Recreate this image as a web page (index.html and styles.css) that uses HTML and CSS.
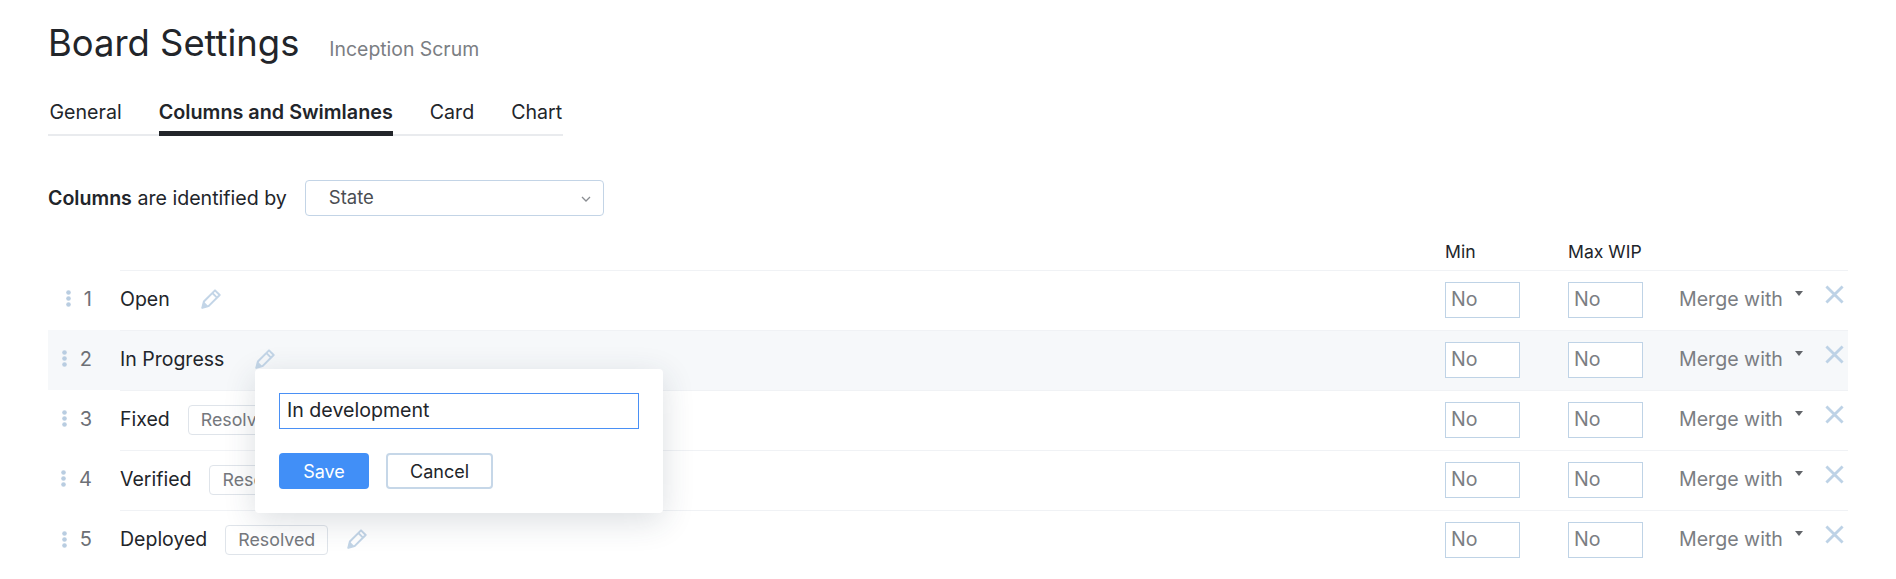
FILE: index.html
```html
<!DOCTYPE html>
<html lang="en">
<head>
<meta charset="utf-8">
<title>Board Settings</title>
<link rel="stylesheet" href="styles.css">
</head>
<body>
<svg class="defs" width="0" height="0" aria-hidden="true">
  <symbol id="pencil" viewBox="1 1 18 18">
    <path d="M2.2 17.8l1.4-5.6L13.6 2.2l4.2 4.2L7.8 16.4z" fill="none" stroke="currentColor" stroke-width="1.8" stroke-linejoin="round"/>
    <path d="M11.2 4.6l4.2 4.2" fill="none" stroke="currentColor" stroke-width="1.6"/>
    <path d="M1.5 18.5l2-6.2 4.2 4.2z" fill="currentColor"/>
  </symbol>
  <symbol id="handle" viewBox="0 0 5 17">
    <circle cx="2.5" cy="2.5" r="2.3" fill="currentColor"/>
    <circle cx="2.5" cy="8.5" r="2.3" fill="currentColor"/>
    <circle cx="2.5" cy="14.5" r="2.3" fill="currentColor"/>
  </symbol>
  <symbol id="close" viewBox="0 0 20 20">
    <path d="M1.5 1.5l17 17M18.5 1.5l-17 17" fill="none" stroke="currentColor" stroke-width="3"/>
  </symbol>
</svg>
<main class="page">
  <header class="title-row">
    <h1 class="title">Board Settings</h1>
    <span class="subtitle">Inception Scrum</span>
  </header>
  <nav class="tabs">
    <a class="tab">General</a>
    <a class="tab tab-active">Columns and Swimlanes</a>
    <a class="tab">Card</a>
    <a class="tab">Chart</a>
  </nav>
  <div class="identify">
    <span class="identify-label"><b>Columns</b> are identified by</span>
    <div class="select">State
      <svg class="chevron" viewBox="0 0 10 6" width="10" height="6"><path d="M1 1l4 4 4-4" fill="none" stroke="currentColor" stroke-width="1.3"/></svg>
    </div>
  </div>
  <div class="row-grid head">
    <span class="head-cell col-min">Min</span>
    <span class="head-cell col-max">Max WIP</span>
  </div>
  <div class="rows">
    <div class="row-grid row">
      <div class="order"><svg class="handle"><use href="#handle"/></svg><span class="num">1</span></div>
      <div class="cell name"><span class="label">Open</span><svg class="pencil"><use href="#pencil"/></svg></div>
      <div class="cell"><span class="wip">No</span></div>
      <div class="cell"><span class="wip">No</span></div>
      <div class="cell"><span class="merge">Merge with</span><i class="caret"></i></div>
      <div class="cell"><svg class="close"><use href="#close"/></svg></div>
    </div>
    <div class="row-grid row row-hover">
      <div class="order"><svg class="handle"><use href="#handle"/></svg><span class="num">2</span></div>
      <div class="cell name"><span class="label">In Progress</span><svg class="pencil"><use href="#pencil"/></svg></div>
      <div class="cell"><span class="wip">No</span></div>
      <div class="cell"><span class="wip">No</span></div>
      <div class="cell"><span class="merge">Merge with</span><i class="caret"></i></div>
      <div class="cell"><svg class="close"><use href="#close"/></svg></div>
    </div>
    <div class="row-grid row">
      <div class="order"><svg class="handle"><use href="#handle"/></svg><span class="num">3</span></div>
      <div class="cell name"><span class="label">Fixed</span><span class="badge">Resolved</span><svg class="pencil"><use href="#pencil"/></svg></div>
      <div class="cell"><span class="wip">No</span></div>
      <div class="cell"><span class="wip">No</span></div>
      <div class="cell"><span class="merge">Merge with</span><i class="caret"></i></div>
      <div class="cell"><svg class="close"><use href="#close"/></svg></div>
    </div>
    <div class="row-grid row">
      <div class="order"><svg class="handle"><use href="#handle"/></svg><span class="num">4</span></div>
      <div class="cell name"><span class="label">Verified</span><span class="badge">Resolved</span><svg class="pencil"><use href="#pencil"/></svg></div>
      <div class="cell"><span class="wip">No</span></div>
      <div class="cell"><span class="wip">No</span></div>
      <div class="cell"><span class="merge">Merge with</span><i class="caret"></i></div>
      <div class="cell"><svg class="close"><use href="#close"/></svg></div>
    </div>
    <div class="row-grid row row-last">
      <div class="order"><svg class="handle"><use href="#handle"/></svg><span class="num">5</span></div>
      <div class="cell name"><span class="label">Deployed</span><span class="badge">Resolved</span><svg class="pencil"><use href="#pencil"/></svg></div>
      <div class="cell"><span class="wip">No</span></div>
      <div class="cell"><span class="wip">No</span></div>
      <div class="cell"><span class="merge">Merge with</span><i class="caret"></i></div>
      <div class="cell"><svg class="close"><use href="#close"/></svg></div>
    </div>
    <div class="popup">
      <div class="popup-input">In development</div>
      <div class="popup-actions">
        <button class="btn btn-save">Save</button>
        <button class="btn btn-cancel">Cancel</button>
      </div>
    </div>
  </div>
</main>
</body>
</html>
```
FILE: styles.css
```css
* { box-sizing: border-box; }
html, body { margin: 0; padding: 0; background: #fff; }
body {
  font-family: Inter, "Liberation Sans", sans-serif;
  font-size: 19.6px;
  color: #22252a;
  overflow: hidden;
}
.defs { position: absolute; }
.page { padding: 21px 48px 0; }

.title-row { display: flex; align-items: baseline; gap: 30px; height: 44px; }
.title { margin: 0; font-size: 36.4px; line-height: 44px; font-weight: 400; }
.subtitle { font-size: 19.4px; color: #7b7e83; }

.tabs {
  display: inline-flex;
  gap: 37px;
  margin-top: 30px;
  height: 41px;
  border-bottom: 2px solid #e9ebee;
  padding: 0 1px 0 1.5px;
  vertical-align: top;
}
.tab { display: block; height: 41px; line-height: 34px; }
.tab-active { font-weight: 600; font-size: 19.8px; border-bottom: 5px solid #22252a; }

.identify { display: flex; align-items: center; gap: 18px; margin-top: 44px; height: 36px; }
.identify-label b { font-weight: 600; }
.select {
  position: relative;
  width: 299px;
  height: 36px;
  line-height: 33px;
  padding-left: 23px;
  border: 1px solid #c3d4e6;
  border-radius: 4px;
  font-size: 18.5px;
  color: #4a4d52;
}
.chevron { position: absolute; right: 12px; top: 15px; color: #8a8d92; }

.row-grid { display: grid; grid-template-columns: 72px 1fr 123px 111px 146px 23px; }
.head { height: 54px; align-items: end; padding-bottom: 6px; font-size: 17.6px; line-height: 24px; }
.col-min { grid-column: 3; }
.col-max { grid-column: 4; }

.rows { position: relative; }
.row { height: 60px; }
.row-last .cell { border-bottom: 1px solid #f0f2f5; height: 61px; }
.row-hover { background: #f6f8fa; }
.order { display: flex; align-items: center; justify-content: flex-end; gap: 13px; padding: 0 28px 3px 0; }
.handle { width: 5px; height: 17px; color: #b9cde1; }
.num { font-size: 20px; color: #6d7076; }
.cell { display: flex; align-items: center; border-top: 1px solid #f0f2f5; height: 60px; padding-bottom: 1px; }
.name { padding-bottom: 3px; }
.label { font-size: 19.5px; }
.pencil { width: 20px; height: 20px; margin-left: 31px; color: #c3d5e7; }
.badge {
  margin: 2px 0 0 18px;
  height: 30px;
  line-height: 28px;
  padding: 0 12px;
  border: 1px solid #dfe4ea;
  border-radius: 4px;
  font-size: 17.8px;
  color: #75787d;
  background: #fff;
}
.badge + .pencil { margin-left: 19px; }
.wip {
  display: block;
  width: 75px;
  height: 36px;
  line-height: 33px;
  padding-left: 5px;
  border: 1px solid #bfd3e6;
  background: #fff;
  font-size: 19.6px;
  color: #7b7e83;
}
.merge { margin-top: -2px; font-size: 19.6px; color: #7b7e83; }
.caret {
  display: block;
  width: 0;
  height: 0;
  margin: -13px 0 0 12px;
  border-left: 4px solid transparent;
  border-right: 4px solid transparent;
  border-top: 5px solid #62656a;
}
.close { width: 19px; height: 19px; margin-top: -12px; color: #bdd2e6; }

.popup {
  position: absolute;
  left: 207px;
  top: 99px;
  width: 408px;
  height: 144px;
  padding: 24px;
  background: #fff;
  border-radius: 4px;
  box-shadow: 0 8px 32px rgba(40, 55, 75, 0.16);
}
.popup-input {
  height: 36px;
  line-height: 33px;
  padding-left: 7px;
  border: 1px solid #4a90f5;
  font-size: 19.6px;
}
.popup-actions { display: flex; gap: 17px; margin-top: 24px; }
.btn {
  height: 36px;
  padding: 0;
  border-radius: 4px;
  font-family: inherit;
  font-size: 18px;
}
.btn-save { width: 90px; background: #418ff7; border: 0; color: #fff; }
.btn-cancel { width: 107px; background: #fff; border: 2px solid #c6d7e8; color: #22252a; }
```
